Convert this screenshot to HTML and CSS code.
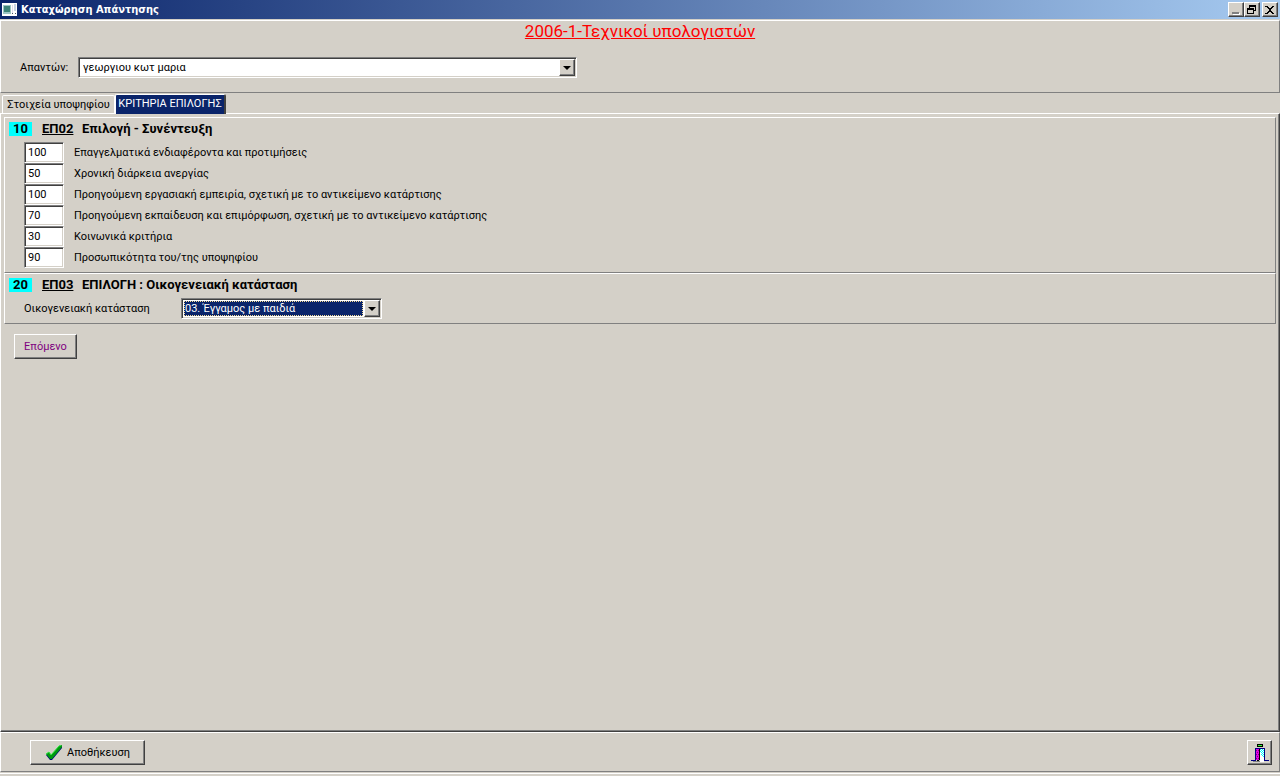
FILE: index.html
```html
<!DOCTYPE html>
<html lang="el">
<head>
  <meta charset="UTF-8">
  <meta name="viewport" content="width=device-width, initial-scale=1.0">
  <title>Καταχώρηση Απάντησης</title>
  <link rel="stylesheet" href="styles.css">
</head>
<body>
  <header class="titlebar">
    <svg class="app-icon" width="16" height="14" viewBox="0 0 16 14" shape-rendering="crispEdges">
      <rect width="15" height="13" fill="#fff"/>
      <rect x="1" y="2" width="8" height="9" fill="#9cc4c4"/>
      <rect x="2" y="3" width="6" height="6" fill="#3d8478"/>
      <rect x="10" y="2" width="1" height="8" fill="#dde"/>
      <rect x="12" y="1" width="2" height="7" fill="#c8d4e4"/>
      <rect x="10" y="10" width="1" height="1" fill="#456"/>
      <rect x="13" y="10" width="1" height="1" fill="#456"/>
    </svg>
    <span class="caption">Καταχώρηση Απάντησης</span>
    <button class="win-btn" aria-label="Ελαχιστοποίηση">
      <svg width="12" height="11" viewBox="0 0 12 11" shape-rendering="crispEdges"><path fill="#fff" d="M3 10h7v1H3zM9 9h1v1H9z"/><path fill="#808080" d="M2 8h7v2H2z"/></svg>
    </button>
    <button class="win-btn" aria-label="Επαναφορά">
      <svg width="12" height="10" viewBox="0 0 12 10" shape-rendering="crispEdges"><path d="M3 0h7v6H8V5h1V2H4v1H3zM1 3h7v6H1zM2 5v3h5V5z" fill-rule="evenodd"/></svg>
    </button>
    <button class="win-btn close" aria-label="Κλείσιμο">
      <svg width="12" height="10" viewBox="0 0 12 10" shape-rendering="crispEdges"><path d="M2 1h2v1h1v1h2V2h1V1h2v1H9v1H8v1H7v2h1v1h1v1h1v1H8V8H7V7H5v1H4v1H2V8h1V7h1V6h1V4H4V3H3V2H2zM1 1h1v1H1zM1 8h1v1H1z"/></svg>
    </button>
  </header>

  <section class="head">
    <h1>2006-1-Τεχνικοί υπολογιστών</h1>
    <div class="who">
      <label for="respondent">Απαντών:</label>
      <div class="combo wide">
        <select id="respondent"><option>γεωργιου κωτ μαρια</option></select>
        <span class="arrow"></span>
      </div>
    </div>
  </section>

  <nav class="tabs" role="tablist">
    <button class="tab" role="tab" aria-selected="false">Στοιχεία υποψηφίου</button>
    <button class="tab active" role="tab" aria-selected="true">ΚΡΙΤΗΡΙΑ ΕΠΙΛΟΓΗΣ</button>
  </nav>

  <main class="page">
    <section class="group">
      <h2><span class="num">10</span><span class="code">ΕΠ02</span>Επιλογή - Συνέντευξη</h2>
      <div class="score"><input type="text" id="c1" value="100"><label for="c1">Επαγγελματικά ενδιαφέροντα και προτιμήσεις</label></div>
      <div class="score"><input type="text" id="c2" value="50"><label for="c2">Χρονική διάρκεια ανεργίας</label></div>
      <div class="score"><input type="text" id="c3" value="100"><label for="c3">Προηγούμενη εργασιακή εμπειρία, σχετική με το αντικείμενο κατάρτισης</label></div>
      <div class="score"><input type="text" id="c4" value="70"><label for="c4">Προηγούμενη εκπαίδευση και επιμόρφωση, σχετική με το αντικείμενο κατάρτισης</label></div>
      <div class="score"><input type="text" id="c5" value="30"><label for="c5">Κοινωνικά κριτήρια</label></div>
      <div class="score"><input type="text" id="c6" value="90"><label for="c6">Προσωπικότητα του/της υποψηφίου</label></div>
    </section>

    <section class="group">
      <h2><span class="num">20</span><span class="code">ΕΠ03</span>ΕΠΙΛΟΓΗ : Οικογενειακή κατάσταση</h2>
      <div class="choice">
        <label for="family">Οικογενειακή κατάσταση</label>
        <div class="combo focused">
          <select id="family"><option>03. Έγγαμος με παιδιά</option></select>
          <span class="arrow"></span>
        </div>
      </div>
    </section>

    <button class="btn next">Επόμενο</button>
  </main>

  <footer class="bottom">
    <button class="btn save">
      <svg width="18" height="16" viewBox="0 0 18 16"><path d="M1 10l3-2 2 3L14 2l3-1v2L7 15H5z" fill="#000080"/><path d="M1 9l3-2 2 3L14 1l3-1v2L7 14H5z" fill="#009a10"/><path d="M1 9l3-2 2 3L14 1l2-1" fill="none" stroke="#30e840"/></svg>
      Αποθήκευση
    </button>
    <button class="btn exit" aria-label="Έξοδος">
      <svg width="18" height="18" viewBox="0 0 18 18" shape-rendering="crispEdges">
        <path fill="#000" d="M6 0h6v3H6z"/><path fill="#3f3" d="M7 1h4v1H7z"/>
        <path fill="#808080" d="M2 17h7v1H2z"/>
        <path fill="#fff" d="M9 5h4v12H9zM9 17h4v1H9z"/>
        <path fill="#0ff" d="M9 5h1v1H9zM11 5h1v1h-1zM10 6h1v1h-1zM12 6h1v1h-1zM9 7h1v1H9zM11 7h1v1h-1zM10 8h1v1h-1zM12 8h1v1h-1zM11 9h1v1h-1zM10 10h1v1h-1zM12 10h1v1h-1zM11 11h1v1h-1zM12 12h1v1h-1z"/>
        <path fill="#e000e0" d="M5 5h3v11H5z"/>
        <path fill="#800080" d="M5 6h1v1H5zM7 6h1v1H7zM6 8h1v1H6zM5 10h1v1H5zM7 10h1v1H7zM6 12h1v1H6zM5 14h1v1H5zM7 14h1v1H7z"/>
        <path fill="#000" d="M8 5h1v11H8zM6 16h2v1H6z"/>
        <path fill="#000080" d="M4 4h10v12h4v1h-5V5H5v12H0v-1h4z"/>
      </svg>
    </button>
  </footer>
</body>
</html>
```

FILE: styles.css
```css
:root {
  --face: #d4d0c8;
  --shadow: #808080;
  --dark: #404040;
  --navy: #0a246a;
}
* { box-sizing: border-box; margin: 0; padding: 0; }
body {
  font: 11px/14px Roboto, "Liberation Sans", Arial, sans-serif;
  background: var(--face);
  color: #000;
  min-height: 100vh;
  display: flex;
  flex-direction: column;
}
button, input, select { font: inherit; color: inherit; }

/* Title bar */
.titlebar {
  height: 19px;
  display: flex;
  align-items: center;
  padding: 0 2px;
  background: linear-gradient(to right, var(--navy), #a6caf0);
}
.caption {
  flex: 1;
  margin-left: 3px;
  color: #fff;
  font: bold 11px/14px "DejaVu Sans Condensed", "DejaVu Sans", sans-serif;
}
.win-btn {
  width: 16px;
  height: 15px;
  display: flex;
  align-items: center;
  justify-content: center;
  background: var(--face);
  border: 1px solid;
  border-color: #fff var(--dark) var(--dark) #fff;
  box-shadow: inset -1px -1px var(--shadow);
}
.win-btn svg { flex: none; }
.close { margin-left: 2px; }

/* Heading and respondent */
.head {
  margin-top: 1px;
  height: 73px;
  border: 1px solid;
  border-color: #fff var(--shadow) var(--shadow) #fff;
}
h1 {
  color: #f00;
  font-size: 17px;
  line-height: 20px;
  font-weight: normal;
  text-align: center;
  text-decoration: underline;
}
.who {
  display: flex;
  align-items: center;
  margin-top: 16px;
}
.who label { width: 58px; margin-left: 19px; }

/* Drop-downs */
.combo {
  position: relative;
  width: 201px;
  height: 21px;
  background: #fff;
  border: 1px solid;
  border-color: var(--shadow) #fff #fff var(--shadow);
  box-shadow: inset 1px 1px var(--dark), inset -1px -1px var(--face);
}
.wide { width: 499px; }
.combo select {
  display: block;
  width: 100%;
  height: 100%;
  padding: 2px 18px 1px 4px;
  appearance: none;
  background: none;
  border: none;
  outline: none;
}
.arrow {
  position: absolute;
  top: 1px;
  right: 1px;
  bottom: 1px;
  width: 16px;
  display: flex;
  align-items: center;
  justify-content: center;
  background: var(--face);
  border: 1px solid;
  border-color: #fff var(--dark) var(--dark) #fff;
  box-shadow: inset -1px -1px var(--shadow);
  pointer-events: none;
}
.arrow::before {
  content: "";
  border: 4px solid transparent;
  border-top-color: #000;
  border-bottom: none;
}
.focused::before {
  content: "";
  position: absolute;
  inset: 2px 18px 2px 2px;
  background: var(--navy);
  border: 1px dotted #f5db95;
}
.focused select { position: relative; padding-left: 3px; color: #fff; }
.focused option { color: #000; }

/* Tabs */
.tabs {
  display: flex;
  align-items: flex-end;
  height: 20px;
  padding-left: 2px;
}
.tab {
  height: 18px;
  min-width: 113px;
  padding: 1px 3px 0;
  background: var(--face);
  border: 1px solid #fff;
  border-bottom: none;
  border-radius: 2px 2px 0 0;
  white-space: nowrap;
}
.tab.active {
  position: relative;
  height: 20px;
  min-width: 111px;
  padding: 0 2px 2px;
  margin-bottom: -1px;
  background: var(--navy);
  color: #fff;
  border-right: 2px solid var(--dark);
}

/* Page */
.page {
  flex: 1;
  padding: 3px;
  border: 1px solid;
  border-color: #fff var(--dark) var(--dark) #fff;
  box-shadow: inset -1px -1px var(--shadow);
}
.group {
  padding: 4px;
  border: 1px solid;
  border-color: #fff var(--shadow) var(--shadow) #fff;
}
.group h2 {
  display: flex;
  font-size: 13px;
  line-height: 14px;
  margin-bottom: 6px;
}
.num {
  width: 23px;
  margin-right: 10px;
  text-align: center;
  background: #0ff;
}
.code { width: 40px; text-decoration: underline; }
.score {
  display: flex;
  align-items: center;
  padding-left: 15px;
}
.score input {
  width: 40px;
  height: 21px;
  margin-right: 10px;
  padding: 0 3px 1px;
  background: #fff;
  border: 1px solid;
  border-color: var(--shadow) #fff #fff var(--shadow);
  box-shadow: inset 1px 1px var(--dark), inset -1px -1px var(--face);
  outline: none;
}
.choice {
  display: flex;
  align-items: center;
  padding-left: 15px;
}
.choice label { width: 157px; }

/* Buttons */
.btn {
  height: 25px;
  display: flex;
  align-items: center;
  justify-content: center;
  background: var(--face);
  border: 1px solid;
  border-color: #fff var(--dark) var(--dark) #fff;
  box-shadow: inset -1px -1px var(--shadow);
}
.next {
  width: 63px;
  margin: 10px 0 0 10px;
  color: #800080;
}

.bottom {
  display: flex;
  justify-content: space-between;
  align-items: center;
  height: 40px;
  padding: 1px 7px 0 29px;
  border: 1px solid;
  border-color: #fff var(--shadow) var(--shadow) #fff;
  margin-bottom: 4px;
  box-shadow: 0 1px var(--face), 0 2px #fff;
}
.save { width: 115px; gap: 4px; }
.exit { width: 25px; }
```
